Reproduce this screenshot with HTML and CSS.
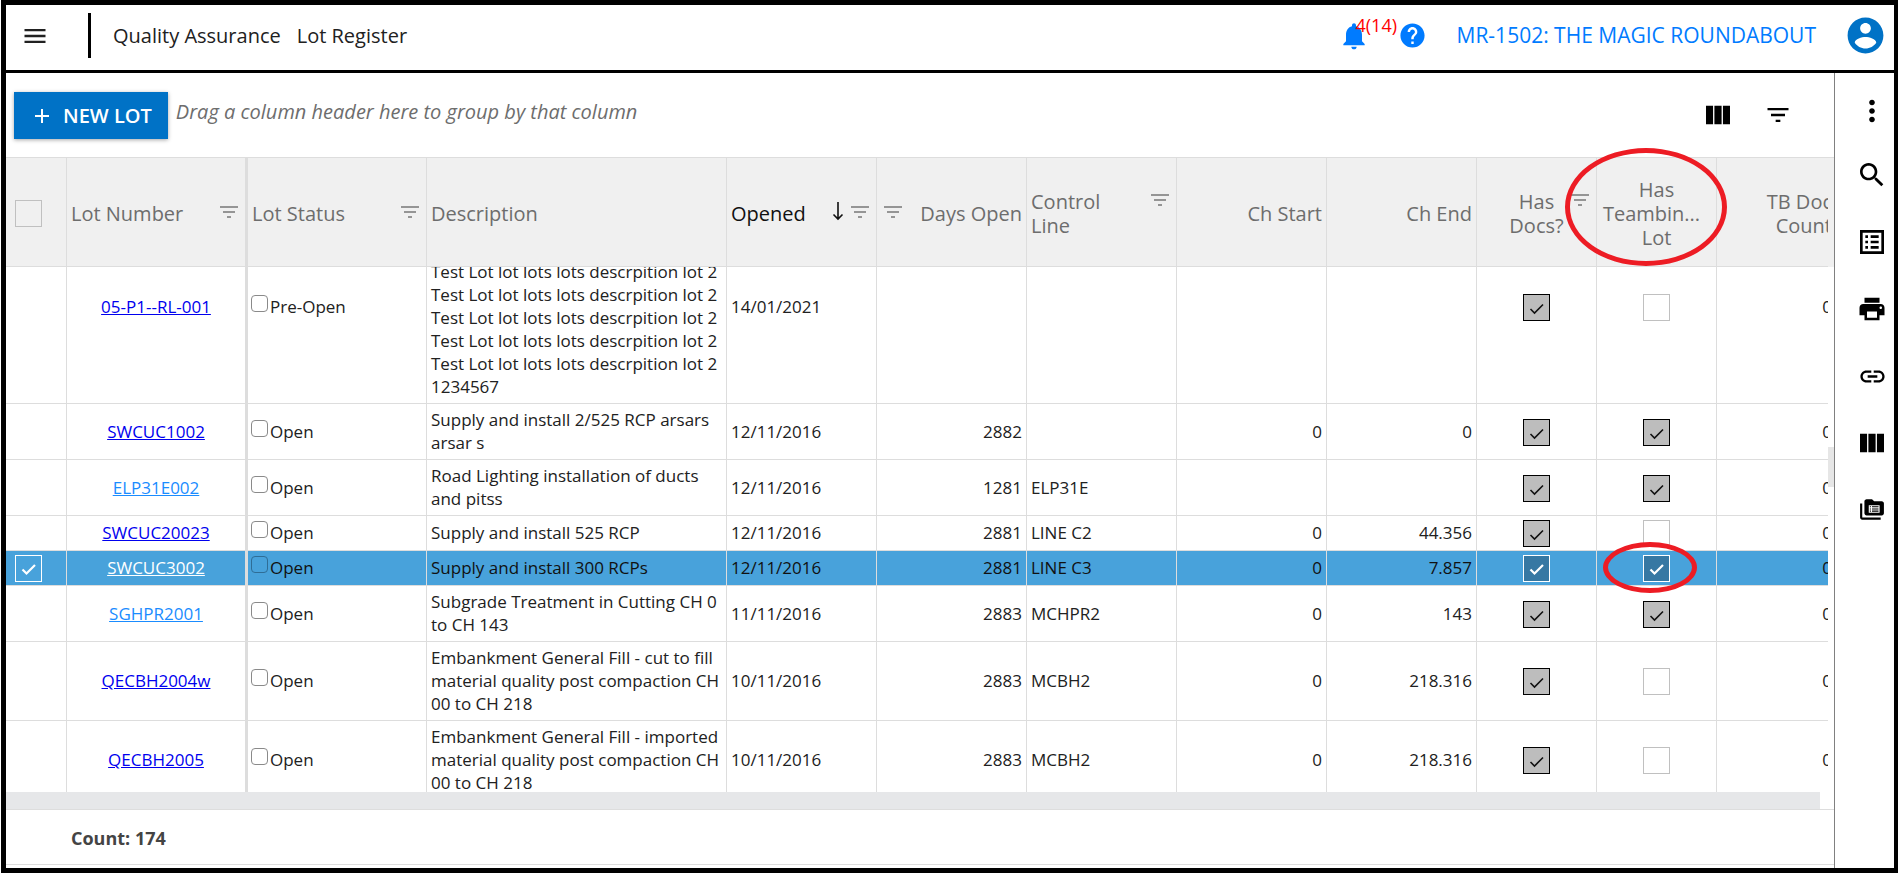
FILE: index.html
```
<!DOCTYPE html>
<html lang="en">
<head>
    <meta charset="utf-8">
    <title>Lot Register</title>
    <link rel="stylesheet" href="styles.css">
</head>
<body>
<svg class="sprite">
    <symbol id="i-filter" viewBox="0 0 24 24"><path d="M10 18h4v-2h-4v2zM3 6v2h18V6H3zm3 7h12v-2H6v2z"/></symbol>
    <symbol id="i-columns" viewBox="0 0 24 24"><path d="M3 5h5.3v14H3zM9.3 5h5.4v14H9.3zM15.7 5H21v14h-5.3z"/></symbol>
</svg>
<div class="app">
    <header class="top-bar">
        <button class="icon-button menu-button" aria-label="Menu">
            <svg viewBox="0 0 24 24" width="28" height="28"><path d="M3 18h18v-2H3v2zm0-5h18v-2H3v2zm0-7v2h18V6H3z"/></svg>
        </button>
        <div class="top-divider"></div>
        <nav class="crumbs">
            <span>Quality Assurance</span>
            <span>Lot Register</span>
        </nav>
        <div class="top-right">
            <button class="icon-button bell-button" aria-label="Notifications">
                <svg viewBox="0 0 24 24" width="32" height="32"><path d="M12 22c1.100 0 2-.9 2-2h-4c0 1.100.9 2 2 2zm6-6v-5c0-3.070-1.640-5.640-4.500-6.320V4c0-.83-.67-1.500-1.500-1.500s-1.500.67-1.500 1.500v.68C7.630 5.360 6 7.920 6 11v5l-2 2v1h16v-1l-2-2z"/></svg>
                <span class="bell-count">4(14)</span>
            </button>
            <button class="icon-button help-button" aria-label="Help">
                <svg viewBox="0 0 24 24" width="29" height="29"><path d="M12 2C6.480 2 2 6.480 2 12s4.480 10 10 10 10-4.480 10-10S17.520 2 12 2zm1 17h-2v-2h2v2zm2.070-7.750l-.9.920C13.450 12.900 13 13.500 13 15h-2v-.5c0-1.100.45-2.100 1.170-2.830l1.240-1.260c.37-.36.59-.86.59-1.410 0-1.100-.9-2-2-2s-2 .9-2 2H8c0-2.210 1.790-4 4-4s4 1.790 4 4c0 .88-.36 1.680-.93 2.250z"/></svg>
            </button>
            <a class="project-link" href="#">MR-1502: THE MAGIC ROUNDABOUT</a>
            <button class="icon-button user-button" aria-label="Account">
                <svg viewBox="0 0 24 24" width="43" height="43"><path d="M12 2C6.480 2 2 6.480 2 12s4.480 10 10 10 10-4.480 10-10S17.520 2 12 2zm0 3c1.660 0 3 1.340 3 3s-1.340 3-3 3-3-1.340-3-3 1.340-3 3-3zm0 14.200c-2.500 0-4.710-1.280-6-3.220.03-1.990 4-3.080 6-3.080 1.990 0 5.970 1.090 6 3.080-1.290 1.940-3.500 3.220-6 3.220z"/></svg>
            </button>
        </div>
    </header>

    <div class="content">
        <main class="register">
            <div class="toolbar">
                <button class="new-lot">
                    <svg viewBox="0 0 16 16" width="16" height="16"><path d="M7 1h2v6h6v2H9v6H7V9H1V7h6z"/></svg>
                    NEW LOT
                </button>
                <span class="group-hint">Drag a column header here to group by that column</span>
                <div class="toolbar-icons">
                    <button class="icon-button" aria-label="Column chooser"><svg width="32" height="32"><use href="#i-columns"/></svg></button>
                    <button class="icon-button" aria-label="Filter"><svg width="28" height="28"><use href="#i-filter"/></svg></button>
                </div>
            </div>

            <div class="grid-head">
                <table class="grid">
                    <colgroup><col class="w-select"><col class="w-number"><col class="w-status"><col class="w-desc"><col class="w-std"><col class="w-std"><col class="w-std"><col class="w-std"><col class="w-std"><col class="w-flag"><col class="w-flag"><col class="w-flag"></colgroup>
                    <thead>
                    <tr>
                        <th><input type="checkbox" class="check" aria-label="Select all"></th>
                        <th class="frozen"><div class="head-cell"><span>Lot Number</span><svg class="head-filter"><use href="#i-filter"/></svg></div></th>
                        <th><div class="head-cell"><span>Lot Status</span><svg class="head-filter"><use href="#i-filter"/></svg></div></th>
                        <th><div class="head-cell"><span>Description</span></div></th>
                        <th class="sorted"><div class="head-cell"><span>Opened</span><svg class="sort-arrow" viewBox="0 0 12 20"><path d="M6 1v17M1.500 13.500L6 18l4.500-4.500"/></svg><svg class="head-filter"><use href="#i-filter"/></svg></div></th>
                        <th><div class="head-cell"><svg class="head-filter"><use href="#i-filter"/></svg><span>Days Open</span></div></th>
                        <th><div class="head-cell"><span>Control<br>Line</span><svg class="head-filter"><use href="#i-filter"/></svg></div></th>
                        <th class="num">Ch Start</th>
                        <th class="num">Ch End</th>
                        <th class="mid"><div class="flag-head">Has<br>Docs?<svg class="head-filter"><use href="#i-filter"/></svg></div></th>
                        <th class="mid">Has<br><span class="cut-word">Teambin...</span>Lot</th>
                        <th class="num">TB Doc<br>Count</th>
                    </tr>
                    </thead>
                </table>
            </div>

            <div class="grid-body">
                <div class="grid-rows">
                    <table class="grid scrolled">
                        <colgroup><col class="w-select"><col class="w-number"><col class="w-status"><col class="w-desc"><col class="w-std"><col class="w-std"><col class="w-std"><col class="w-std"><col class="w-std"><col class="w-flag"><col class="w-flag"><col class="w-flag"></colgroup>
                        <tbody>
                        <tr>
                            <td></td>
                            <td class="frozen mid"><a href="#">05-P1--RL-001</a></td>
                            <td><label class="status"><input type="checkbox">Pre-Open</label></td>
                            <td>Test Lot lot lots lots descrpition lot 2<br>Test Lot lot lots lots descrpition lot 2<br>Test Lot lot lots lots descrpition lot 2<br>Test Lot lot lots lots descrpition lot 2<br>Test Lot lot lots lots descrpition lot 2<br>Test Lot lot lots lots descrpition lot 2<br>Test Lot lot lots lots descrpition lot 2<br>1234567</td>
                            <td>14/01/2021</td>
                            <td class="num"></td>
                            <td></td>
                            <td class="num"></td>
                            <td class="num"></td>
                            <td class="mid"><input type="checkbox" class="check" aria-label="Has docs" checked></td>
                            <td class="mid"><input type="checkbox" class="check" aria-label="Has Teambinder lot"></td>
                            <td class="num">0</td>
                        </tr>
                        <tr>
                            <td></td>
                            <td class="frozen mid"><a href="#">SWCUC1002</a></td>
                            <td><label class="status"><input type="checkbox">Open</label></td>
                            <td>Supply and install 2/525 RCP arsars<br>arsar s</td>
                            <td>12/11/2016</td>
                            <td class="num">2882</td>
                            <td></td>
                            <td class="num">0</td>
                            <td class="num">0</td>
                            <td class="mid"><input type="checkbox" class="check" aria-label="Has docs" checked></td>
                            <td class="mid"><input type="checkbox" class="check" aria-label="Has Teambinder lot" checked></td>
                            <td class="num">0</td>
                        </tr>
                        <tr>
                            <td></td>
                            <td class="frozen mid"><a class="light" href="#">ELP31E002</a></td>
                            <td><label class="status"><input type="checkbox">Open</label></td>
                            <td>Road Lighting installation of ducts<br>and pitss</td>
                            <td>12/11/2016</td>
                            <td class="num">1281</td>
                            <td>ELP31E</td>
                            <td class="num"></td>
                            <td class="num"></td>
                            <td class="mid"><input type="checkbox" class="check" aria-label="Has docs" checked></td>
                            <td class="mid"><input type="checkbox" class="check" aria-label="Has Teambinder lot" checked></td>
                            <td class="num">0</td>
                        </tr>
                        <tr>
                            <td></td>
                            <td class="frozen mid"><a href="#">SWCUC20023</a></td>
                            <td><label class="status"><input type="checkbox">Open</label></td>
                            <td>Supply and install 525 RCP</td>
                            <td>12/11/2016</td>
                            <td class="num">2881</td>
                            <td>LINE C2</td>
                            <td class="num">0</td>
                            <td class="num">44.356</td>
                            <td class="mid"><input type="checkbox" class="check" aria-label="Has docs" checked></td>
                            <td class="mid"><input type="checkbox" class="check" aria-label="Has Teambinder lot"></td>
                            <td class="num">0</td>
                        </tr>
                        <tr class="selected">
                            <td><input type="checkbox" class="check row-check" aria-label="Select row" checked></td>
                            <td class="frozen mid"><a href="#">SWCUC3002</a></td>
                            <td><label class="status"><input type="checkbox">Open</label></td>
                            <td>Supply and install 300 RCPs</td>
                            <td>12/11/2016</td>
                            <td class="num">2881</td>
                            <td>LINE C3</td>
                            <td class="num">0</td>
                            <td class="num">7.857</td>
                            <td class="mid"><input type="checkbox" class="check" aria-label="Has docs" checked></td>
                            <td class="mid"><input type="checkbox" class="check" aria-label="Has Teambinder lot" checked></td>
                            <td class="num">0</td>
                        </tr>
                        <tr>
                            <td></td>
                            <td class="frozen mid"><a class="light" href="#">SGHPR2001</a></td>
                            <td><label class="status"><input type="checkbox">Open</label></td>
                            <td>Subgrade Treatment in Cutting CH 0<br>to CH 143</td>
                            <td>11/11/2016</td>
                            <td class="num">2883</td>
                            <td>MCHPR2</td>
                            <td class="num">0</td>
                            <td class="num">143</td>
                            <td class="mid"><input type="checkbox" class="check" aria-label="Has docs" checked></td>
                            <td class="mid"><input type="checkbox" class="check" aria-label="Has Teambinder lot" checked></td>
                            <td class="num">0</td>
                        </tr>
                        <tr>
                            <td></td>
                            <td class="frozen mid"><a href="#">QECBH2004w</a></td>
                            <td><label class="status"><input type="checkbox">Open</label></td>
                            <td>Embankment General Fill - cut to fill<br>material quality post compaction CH<br>00 to CH 218</td>
                            <td>10/11/2016</td>
                            <td class="num">2883</td>
                            <td>MCBH2</td>
                            <td class="num">0</td>
                            <td class="num">218.316</td>
                            <td class="mid"><input type="checkbox" class="check" aria-label="Has docs" checked></td>
                            <td class="mid"><input type="checkbox" class="check" aria-label="Has Teambinder lot"></td>
                            <td class="num">0</td>
                        </tr>
                        <tr>
                            <td></td>
                            <td class="frozen mid"><a href="#">QECBH2005</a></td>
                            <td><label class="status"><input type="checkbox">Open</label></td>
                            <td>Embankment General Fill - imported<br>material quality post compaction CH<br>00 to CH 218</td>
                            <td>10/11/2016</td>
                            <td class="num">2883</td>
                            <td>MCBH2</td>
                            <td class="num">0</td>
                            <td class="num">218.316</td>
                            <td class="mid"><input type="checkbox" class="check" aria-label="Has docs" checked></td>
                            <td class="mid"><input type="checkbox" class="check" aria-label="Has Teambinder lot"></td>
                            <td class="num">0</td>
                        </tr>
                        </tbody>
                    </table>
                </div>
                <div class="scroll-thumb"></div>
            </div>
            <div class="scroll-x"></div>
            <div class="grid-footer">Count: 174</div>
        </main>

        <aside class="side-bar">
            <button class="icon-button more-button" aria-label="More"><svg viewBox="0 0 24 24" width="34" height="34"><path d="M12 8c1.100 0 2-.9 2-2s-.9-2-2-2-2 .9-2 2 .9 2 2 2zm0 2c-1.100 0-2 .9-2 2s.9 2 2 2 2-.9 2-2-.9-2-2-2zm0 6c-1.100 0-2 .9-2 2s.9 2 2 2 2-.9 2-2-.9-2-2-2z"/></svg></button>
            <button class="icon-button" aria-label="Search"><svg viewBox="0 0 24 24" width="32" height="32"><path d="M15.500 14h-.79l-.28-.27C15.410 12.590 16 11.110 16 9.500 16 5.910 13.090 3 9.500 3S3 5.910 3 9.500 5.910 16 9.500 16c1.610 0 3.090-.59 4.230-1.570l.27.28v.79l5 4.990L20.490 19l-4.990-5zm-6 0C7.010 14 5 11.990 5 9.500S7.010 5 9.500 5 14 7.010 14 9.500 11.990 14 9.500 14z"/></svg></button>
            <button class="icon-button" aria-label="Details"><svg viewBox="0 0 24 24" width="32" height="32"><path d="M19 5v14H5V5h14m2-2H3v18h18V3zM11 7h6v2h-6V7zm0 4h6v2h-6v-2zm0 4h6v2h-6zM7 7h2v2H7zm0 4h2v2H7zm0 4h2v2H7z"/></svg></button>
            <button class="icon-button" aria-label="Print"><svg viewBox="0 0 24 24" width="30" height="30"><path d="M19 8H5c-1.660 0-3 1.340-3 3v6h4v4h12v-4h4v-6c0-1.660-1.340-3-3-3zm-3 11H8v-5h8v5zm3-7c-.55 0-1-.45-1-1s.45-1 1-1 1 .45 1 1-.45 1-1 1zm-1-9H6v4h12V3z"/></svg></button>
            <button class="icon-button" aria-label="Link"><svg viewBox="0 0 24 24" width="29" height="29"><path d="M3.900 12c0-1.710 1.390-3.100 3.100-3.100h4V7H7c-2.760 0-5 2.240-5 5s2.240 5 5 5h4v-1.900H7c-1.710 0-3.100-1.390-3.100-3.100zM8 13h8v-2H8v2zm9-6h-4v1.900h4c1.710 0 3.100 1.390 3.100 3.100s-1.390 3.100-3.100 3.100h-4V17h4c2.760 0 5-2.240 5-5s-2.240-5-5-5z"/></svg></button>
            <button class="icon-button" aria-label="Columns"><svg width="32" height="32"><use href="#i-columns"/></svg></button>
            <button class="icon-button" aria-label="Documents"><svg viewBox="0 0 24 24" width="26" height="26"><path d="M3 6H1v13c0 1.100.9 2 2 2h17v-2H3V6z"/><path fill-rule="evenodd" d="M21 4h-7l-2-2H7c-1.100 0-2 .9-2 2v11c0 1.100.9 2 2 2h14c1.100 0 2-.9 2-2V6c0-1.100-.9-2-2-2zM9 7.500h10v7H9zM10 8.500v1h1v-1zm2 0v1h6v-1zm-2 2v1h1v-1zm2 0v1h6v-1zm-2 2v1h1v-1zm2 0v1h6v-1z"/></svg></button>
        </aside>
    </div>

    <div class="ring ring-head"></div>
    <div class="ring ring-cell"></div>
</div>
</body>
</html>
```
FILE: styles.css
```
* {
    box-sizing: border-box;
}

body {
    margin: 0;
    padding-left: 1px;
    height: 100vh;
    overflow: hidden;
    background: #fff;
    color: #212121;
    font-family: "Open Sans", "Noto Sans", sans-serif;
    font-size: 17px;
    line-height: 23px;
}

button, input {
    font: inherit;
    margin: 0;
}

.sprite {
    display: none;
}

.app {
    position: relative;
    height: 100%;
    display: flex;
    flex-direction: column;
    border: 5px solid #000;
    border-right-width: 4px;
}

.icon-button {
    display: flex;
    align-items: center;
    justify-content: center;
    padding: 0;
    border: 0;
    background: none;
    color: #000;
    cursor: pointer;
}

svg {
    fill: currentColor;
}

/* top bar */

.top-bar {
    display: flex;
    align-items: center;
    height: 68px;
    padding: 0 7px 4px 15px;
    border-bottom: 3px solid #000;
}

.menu-button {
    color: #212121;
}

.top-divider {
    width: 3px;
    height: 45px;
    margin: 0 22px 0 39px;
    background: #000;
}

.crumbs {
    display: flex;
    gap: 16px;
    font-size: 20px;
    font-weight: 500;
}

.top-right {
    display: flex;
    align-items: center;
    margin-left: auto;
    color: #007bff;
}

.bell-button {
    position: relative;
    color: #007bff;
}

.bell-count {
    position: absolute;
    top: -6px;
    left: 18px;
    color: #f00;
    font-size: 18px;
}

.help-button {
    margin-left: 28px;
    color: #007bff;
}

.project-link {
    margin: 0 28px 0 30px;
    color: #007bff;
    font-size: 21px;
    font-weight: 500;
    text-decoration: none;
}

.user-button {
    color: #0072c6;
}

/* layout */

.content {
    flex: 1;
    min-height: 0;
    display: flex;
}

.register {
    flex: 1;
    min-width: 0;
    display: flex;
    flex-direction: column;
}

.side-bar {
    width: 60px;
    padding: 24px 0 0 14px;
    border-left: 1px solid #808080;
    display: flex;
    flex-direction: column;
    gap: 33px;
}

.side-bar .icon-button {
    width: 46px;
    height: 34px;
}

.side-bar .more-button {
    height: 28px;
}

/* toolbar */

.toolbar {
    display: flex;
    align-items: flex-start;
    height: 84px;
    padding: 19px 42px 0 8px;
}

.new-lot {
    display: flex;
    align-items: center;
    gap: 13px;
    height: 47px;
    padding: 0 16px 0 20px;
    border: 0;
    background: #0072c6;
    box-shadow: 0 1px 4px rgba(0, 0, 0, .35);
    color: #fff;
    font-size: 20px;
    font-weight: 600;
}

.group-hint {
    padding: 8px 0 0 8px;
    color: #6d6d6d;
    font-size: 20px;
    font-style: italic;
    font-weight: 500;
}

.toolbar-icons {
    display: flex;
    gap: 30px;
    height: 46px;
    margin-left: auto;
}

/* grid */

.grid {
    width: 100%;
    min-width: 1831px;
    table-layout: fixed;
    border-collapse: separate;
    border-spacing: 0;
}

.w-select { width: 61px; }
.w-number { width: 181px; }
.w-status { width: 179px; }
.w-desc { width: 300px; }
.w-std { width: 150px; }
.w-flag { width: 120px; }

.grid th,
.grid td {
    padding: 4px 4px 5px;
    border-right: 1px solid #ddd;
    border-bottom: 1px solid #ddd;
    text-align: left;
    white-space: nowrap;
}

.grid .frozen {
    border-right: 3px solid #ddd;
}

.grid .num {
    text-align: right;
}

.grid .mid {
    text-align: center;
}

.grid-head {
    padding-right: 6px;
    border-top: 1px solid #ddd;
    background: #f0f0f0;
    overflow: hidden;
}

.grid-head .grid {
    clip-path: inset(0 9px 0 0);
}

.grid th {
    height: 109px;
    padding: 6px 4px 3px;
    color: #6d6d6d;
    font-size: 20px;
    font-weight: 500;
    line-height: 24px;
}

.grid .sorted {
    color: #111;
}

.head-cell {
    display: flex;
    justify-content: space-between;
}

.head-filter {
    flex: none;
    width: 24px;
    height: 24px;
    margin-top: -2px;
    color: #959595;
}

.sort-arrow {
    width: 12px;
    height: 20px;
    margin-top: -1px;
    margin-left: auto;
    margin-right: 4px;
    fill: none;
    stroke: #111;
    stroke-width: 1.6;
}

.cut-word {
    display: block;
    margin-right: 10px;
}

.flag-head {
    position: relative;
}

.flag-head .head-filter {
    position: absolute;
    top: 0;
    right: 0;
}

.grid-body {
    position: relative;
    flex: 1;
    min-height: 0;
    padding-right: 6px;
}

.grid-rows {
    height: 100%;
    overflow: hidden;
}

/* the list stands part way down its first row */
.scrolled {
    margin-top: -57px;
}

.grid td {
    height: 35px;
}

.grid td:has(.check) {
    padding-top: 4px;
    padding-bottom: 3px;
}

.grid a {
    color: #00e;
}

.grid a.light {
    color: #1a8cff;
}

.selected td {
    background: #48a2db;
    color: #111;
}

.grid .selected a {
    color: #fff;
}

.check {
    appearance: none;
    display: inline-block;
    width: 27px;
    height: 27px;
    border: 1px solid #c0c0c0;
    vertical-align: top;
}

td:first-child .check,
th:first-child .check {
    margin-left: 5px;
}

.check:checked {
    border-color: #000;
    background: #bdbdbd url("data:image/svg+xml,%3Csvg xmlns='http://www.w3.org/2000/svg' width='25' height='25'%3E%3Cpath d='M6.500 14L10.500 18L19 9.500' fill='none' stroke='%23111' stroke-width='1.600'/%3E%3C/svg%3E") center no-repeat;
}

.selected .check:checked {
    border-color: #fff;
    background: #3678a3 url("data:image/svg+xml,%3Csvg xmlns='http://www.w3.org/2000/svg' width='25' height='25'%3E%3Cpath d='M6.500 13.500L10.500 17.500L19 9' fill='none' stroke='%23fff' stroke-width='2.200'/%3E%3C/svg%3E") center no-repeat;
}

.selected .row-check:checked {
    background-color: transparent;
}

.status {
    display: flex;
    gap: 2px;
}

.status input {
    appearance: none;
    width: 17px;
    height: 17px;
    margin-left: -1px;
    border: 1px solid #8a8a8a;
    border-radius: 4px;
}

.selected .status input {
    border-color: #2f6d96;
}

.scroll-thumb {
    position: absolute;
    top: 180px;
    right: 0;
    width: 6px;
    height: 40px;
    background: #e6e6e6;
}

.scroll-x {
    height: 17px;
    margin-right: 14px;
    background: #e6e7e9;
}

.grid-footer {
    height: 59px;
    padding: 17px 0 0 65px;
    border-top: 1px solid #ddd;
    background: linear-gradient(#ddd, #ddd) left bottom 3px / 100% 1px no-repeat;
    color: #444;
    font-size: 18px;
    font-weight: 700;
}

/* highlight rings */

.ring {
    position: absolute;
    border: 5px solid #ed1c24;
    border-radius: 50%;
    pointer-events: none;
}

.ring-head {
    top: 143px;
    left: 1559px;
    width: 162px;
    height: 118px;
}

.ring-cell {
    top: 537px;
    left: 1597px;
    width: 94px;
    height: 51px;
}
```
